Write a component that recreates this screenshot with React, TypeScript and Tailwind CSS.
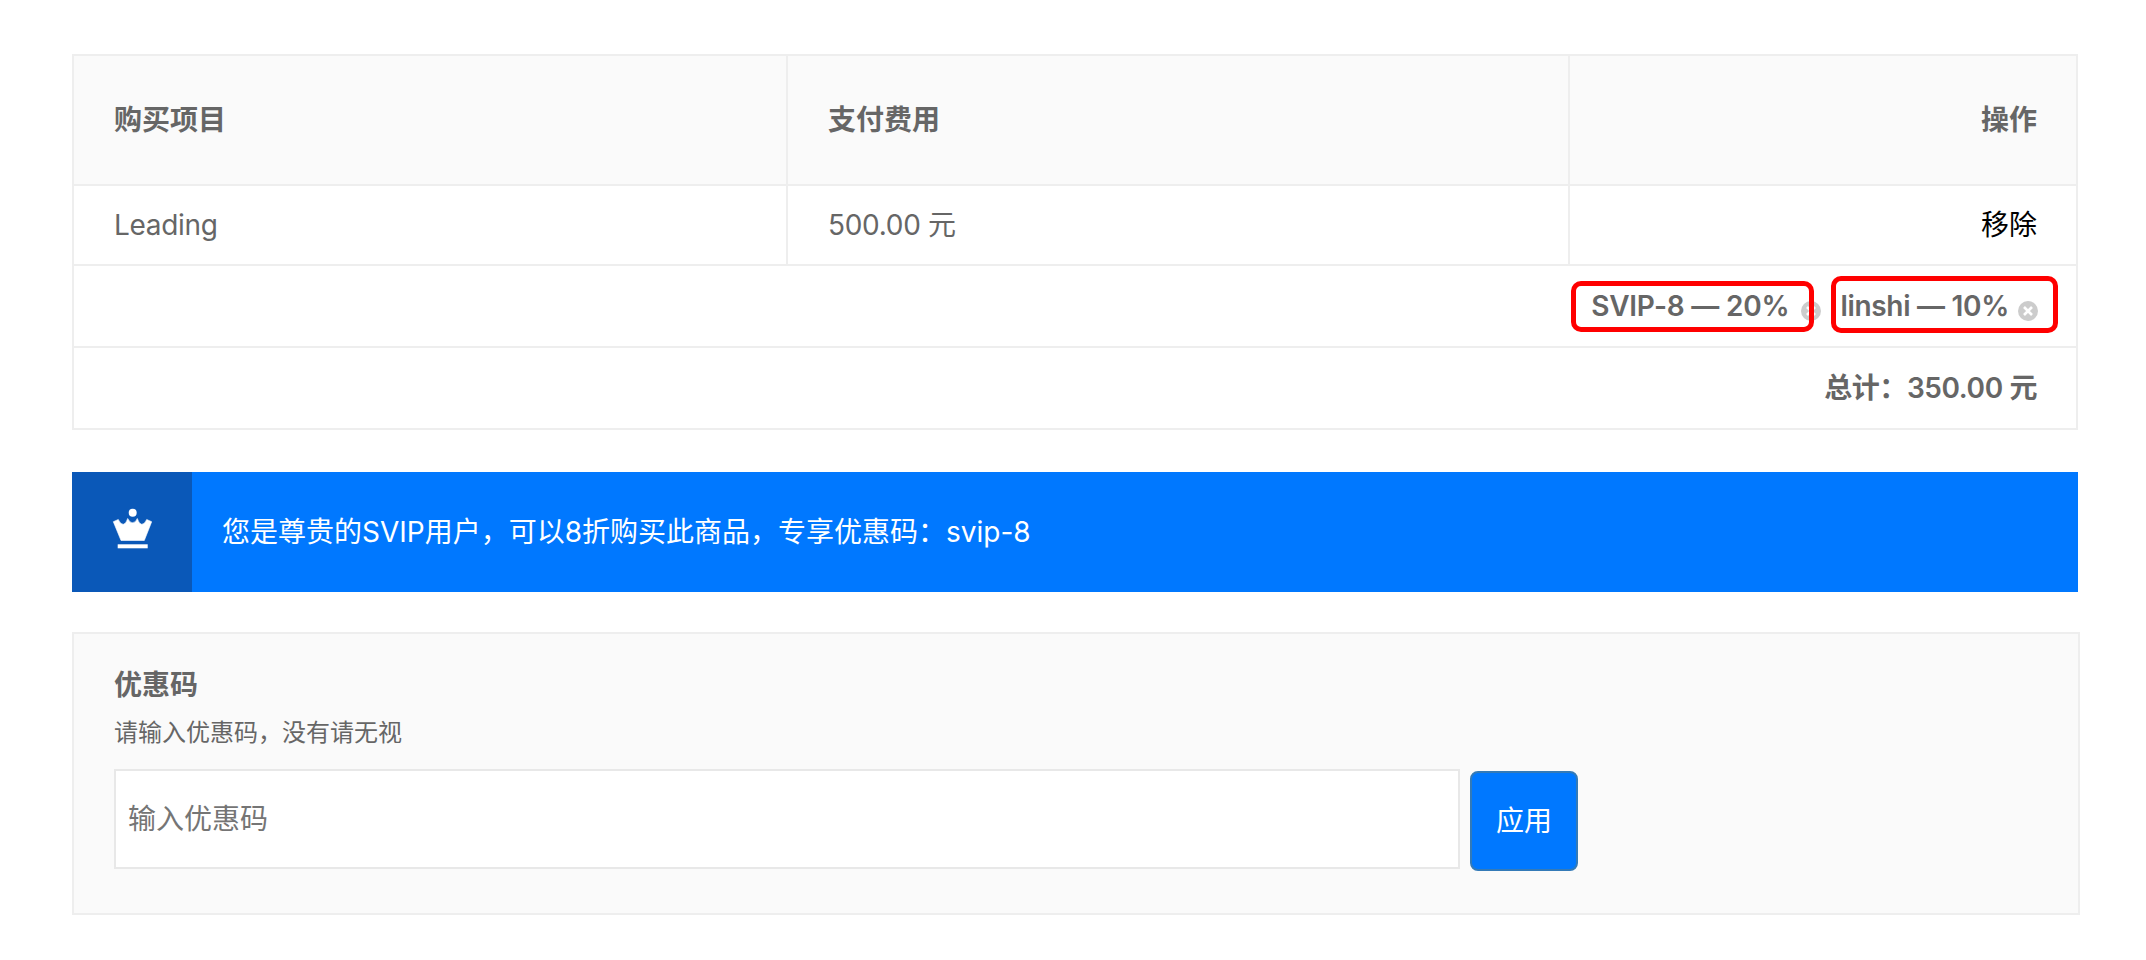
const cjk = "font-['Inter','Noto_Sans_CJK_SC',sans-serif]";

function Crown() {
  return (
    <svg width="40" height="41" viewBox="0 0 40 41" fill="white" className="mb-2">
      <circle cx="20.7" cy="4.7" r="4" />
      <path
        d="M1.3 13.7 L6.3 11.5 Q8.5 16.5 11.3 16.3 Q14 16 15.7 10.5 Q18 15 20.3 14.7 Q23.5 15 25.3 10.5 Q27 16 29.7 16.3 Q32.5 16.5 34.7 11.5 L39.7 13.7 L32.3 32.5 L9 32.5 Z"
        stroke="white"
        strokeWidth="0.6"
        strokeLinejoin="round"
      />
      <rect x="5.7" y="36.3" width="30" height="4" />
    </svg>
  );
}

function CloseDot() {
  return (
    <svg viewBox="0 0 20 20" className="h-5 w-5 shrink-0">
      <circle cx="10" cy="10" r="10" fill="#cccccc" />
      <path d="M6 6 L14 14 M14 6 L6 14" stroke="white" strokeWidth="2.6" />
    </svg>
  );
}

function Coupon({ label, boxClass, className, gapClass }: { label: string; boxClass: string; className: string; gapClass: string }) {
  return (
    <span className={`relative inline-flex items-center font-semibold ${className}`}>
      <span>{label}</span>
      <span className={`mt-[10px] ${gapClass}`}>
        <CloseDot />
      </span>
      {/* red annotation drawn over the tag */}
      <span className={`absolute rounded-[10px] border-[5px] border-[#ff0000] ${boxClass}`} />
    </span>
  );
}

export default function App() {
  return (
    <div className={`min-h-[960px] bg-white px-[72px] pt-[54px] text-[28px] text-[#666666] ${cjk}`}>
      <div className="w-[2006px] border-2 border-[#eeeeee]">
        <div className="grid h-[128px] grid-cols-[712px_782px_1fr] bg-[#fafafa] font-semibold">
          <div className="flex items-center pl-10">购买项目</div>
          <div className="flex items-center border-l-2 border-[#eeeeee] pl-10">支付费用</div>
          <div className="flex items-center justify-end border-l-2 border-[#eeeeee] pr-[39px]">操作</div>
        </div>
        <div className="grid h-[80px] grid-cols-[712px_782px_1fr] border-t-2 border-[#eeeeee]">
          <div className="flex items-center pl-10 tracking-[-0.3px]">Leading</div>
          <div className="flex items-center border-l-2 border-[#eeeeee] pl-10 tracking-[-0.3px]">500.00 元</div>
          <div className="flex items-center justify-end border-l-2 border-[#eeeeee] pr-[39px] text-black">移除</div>
        </div>
        <div className="flex h-[82px] items-center justify-end border-t-2 border-[#eeeeee] pr-[38px]">
          <Coupon
            label="SVIP-8 — 20%"
            className="mr-[19px] tracking-[-0.2px]"
            gapClass="ml-3"
            boxClass="-left-5 right-[7px] -top-1 -bottom-[5px]"
          />
          <Coupon
            label="linshi — 10%"
            className="tracking-[-0.3px]"
            gapClass="ml-[9px]"
            boxClass="-left-[9px] -right-5 -top-[9px] -bottom-1.5"
          />
        </div>
        <div className="flex h-[82px] items-center justify-end border-t-2 border-[#eeeeee] pr-[39px] font-semibold tracking-[-0.4px]">
          总计：350.00 元
        </div>
      </div>

      <div className="mt-[42px] flex h-[120px] w-[2006px] items-center bg-[#0078ff] text-white">
        <div className="flex h-full w-[120px] items-center justify-center bg-[#0a58b8]">
          <Crown />
        </div>
        <div className="pl-[30px]">您是尊贵的SVIP用户，可以8折购买此商品，专享优惠码：svip-8</div>
      </div>

      <div className="mt-10 h-[283px] w-[2008px] border-2 border-[#eeeeee] bg-[#fafafa] pl-10 pt-[31px]">
        <div className="font-semibold leading-[40px]">优惠码</div>
        <div className="mt-[10px] text-[24px] leading-[36px]">请输入优惠码，没有请无视</div>
        <div className="mt-[18px] flex items-start">
          <input
            placeholder="输入优惠码"
            className="h-[100px] w-[1346px] border-2 border-[#e8e8e8] bg-white pl-3 text-[28px] placeholder:text-[#757575]"
          />
          <button className="ml-2.5 mt-0.5 h-[100px] w-[108px] rounded-lg border-2 border-[#337ab7] bg-[#0078ff] text-white">
            应用
          </button>
        </div>
      </div>
    </div>
  );
}
